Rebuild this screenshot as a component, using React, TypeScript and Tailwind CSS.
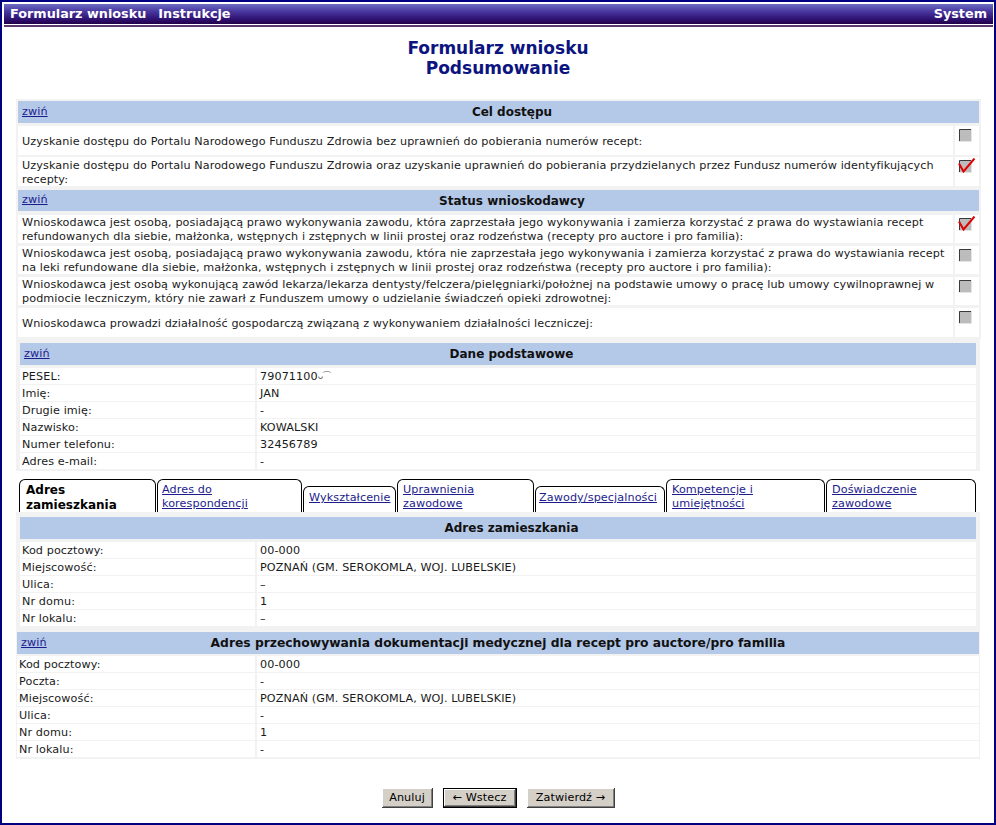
import React from "react";

const FONT = "font-['DejaVu_Sans',Verdana,sans-serif]";

function CheckBox({ checked }: { checked: boolean }) {
  return (
    <svg width="20" height="17" viewBox="0 0 20 17" className="block">
      <rect x="2" y="2" width="12" height="12" fill="#bcbcbc" />
      <path d="M2.5 14V2.5H14" fill="none" stroke="#3a3a3a" strokeWidth="1" />
      <path d="M2 14.5H14.5V2" fill="none" stroke="#e4e4e4" strokeWidth="1" />
      {checked && (
        <path
          d="M2 5.5L6.5 13.5L17.5 0.5"
          fill="none"
          stroke="#e00000"
          strokeWidth="2"
        />
      )}
    </svg>
  );
}

function SectionHeader({
  title,
  collapse = true,
  centerFull = false,
  h = "h-[22px]",
}: {
  title: string;
  collapse?: boolean;
  centerFull?: boolean;
  h?: string;
}) {
  if (centerFull) {
    return (
      <div className={`${h} bg-[#b4c8e8] grid grid-cols-[1fr_auto_1fr] items-center`}>
        <div className="pl-[4px]">
          {collapse && <a className="text-[#1c1c8c] underline">zwiń</a>}
        </div>
        <div className="font-bold text-[12.3px] tracking-normal text-[#111]">{title}</div>
        <div />
      </div>
    );
  }
  return (
    <div className={`${h} bg-[#b4c8e8] flex items-center`}>
      <div className="w-[27px] pl-[4px] shrink-0">
        {collapse && <a className="text-[#1c1c8c] underline">zwiń</a>}
      </div>
      <div className="flex-1 text-center font-bold text-[12px] tracking-normal text-[#111]">
        {title}
      </div>
    </div>
  );
}

function CheckRow({
  text,
  checked,
  h,
}: {
  text: React.ReactNode;
  checked: boolean;
  h: string;
}) {
  return (
    <div className={`flex gap-[2px] ${h}`}>
      <div className="flex-1 min-w-0 bg-white flex items-center pl-[4px] pr-[4px] pt-[2px] leading-[14px]">
        <div className="whitespace-nowrap">{text}</div>
      </div>
      <div className="w-[24px] shrink-0 bg-white pt-[1px] pl-[2px]">
        <CheckBox checked={checked} />
      </div>
    </div>
  );
}

function DataRows({
  rows,
  labelW,
}: {
  rows: [string, React.ReactNode][];
  labelW: string;
}) {
  return (
    <div className="flex flex-col gap-[1px]">
      {rows.map(([label, value]) => (
        <div key={label} className="flex gap-[2px] h-[16px]">
          <div className={`${labelW} shrink-0 bg-white pl-[2px] leading-[17px]`}>
            {label}
          </div>
          <div className="flex-1 bg-white pl-[3px] leading-[17px]">{value}</div>
        </div>
      ))}
    </div>
  );
}

type Tab = {
  label: React.ReactNode;
  w: string;
  short?: boolean;
  active?: boolean;
  pl?: string;
};

const tabs: Tab[] = [
  { label: <>Adres<br />zamieszkania</>, w: "w-[137px]", active: true, pl: "pl-[6px]" },
  { label: <>Adres do<br />korespondencji</>, w: "w-[145px]", pl: "pl-[4px]" },
  { label: "Wykształcenie", w: "w-[93px]", short: true, pl: "pl-[5px]" },
  { label: <>Uprawnienia<br />zawodowe</>, w: "w-[137px]", pl: "pl-[5px]" },
  { label: "Zawody/specjalności", w: "w-[130px]", short: true, pl: "pl-[3px]" },
  { label: <>Kompetencje i<br />umiejętności</>, w: "w-[159px]", pl: "pl-[5px]" },
  { label: <>Doświadczenie<br />zawodowe</>, w: "w-[150px]", pl: "pl-[5px]" },
];

const btn =
  "h-[20px] bg-[#d4d0c8] shadow-[inset_-1px_-1px_#404040,inset_1px_1px_#ffffff,inset_-2px_-2px_#808080]";

export default function App() {
  return (
    <div
      className={`${FONT} w-[996px] h-[825px] border-2 border-[#000080] bg-white text-[11.2px] tracking-[0.1px] text-[#1a1a1a] overflow-hidden`}
    >
      {/* TOP BAR */}
      <div className="mt-[2px] ml-[2px] mr-[1px] h-[20px] bg-[linear-gradient(to_bottom,#6e6ec4,#4a3aa0_35%,#32167a_70%,#22004a)] flex items-center justify-between px-[6px] text-white font-bold text-[12.8px] tracking-normal">
        <div className="flex gap-[12px]">
          <span>Formularz wniosku</span>
          <span>Instrukcje</span>
        </div>
        <span>System</span>
      </div>
      <div className="ml-[2px] mr-[1px] mt-[1px] h-[2px] bg-[#5a3a6e]" />

      {/* TITLE */}
      <div className="mt-[11px] text-center font-bold text-[17px] tracking-normal leading-[20px] text-[#0c1480]">
        <div>Formularz wniosku</div>
        <div>Podsumowanie</div>
      </div>

      {/* CEL DOSTEPU */}
      <div className="mt-[21px] ml-[14px] w-[965px] bg-[#f2f2f2] p-[2px] flex flex-col">
        <SectionHeader title="Cel dostępu" />
        <div className="mt-[3px]">
          <CheckRow
            h="h-[29px]"
            checked={false}
            text="Uzyskanie dostępu do Portalu Narodowego Funduszu Zdrowia bez uprawnień do pobierania numerów recept:"
          />
        </div>
        <div className="mt-[2px]">
          <CheckRow
            h="h-[29px]"
            checked={true}
            text={
              <>
                Uzyskanie dostępu do Portalu Narodowego Funduszu Zdrowia oraz uzyskanie uprawnień do pobierania przydzielanych przez Fundusz numerów identyfikujących
                <br />
                recepty:
              </>
            }
          />
        </div>
      </div>

      {/* STATUS */}
      <div className="ml-[14px] w-[965px] bg-[#f2f2f2] p-[2px] flex flex-col">
        <SectionHeader title="Status wnioskodawcy" h="h-[21px]" />
        <div className="mt-[4px] flex flex-col gap-[3px]">
          <CheckRow
            h="h-[28px]"
            checked={true}
            text={
              <>
                Wnioskodawca jest osobą, posiadającą prawo wykonywania zawodu, która zaprzestała jego wykonywania i zamierza korzystać z prawa do wystawiania recept
                <br />
                refundowanych dla siebie, małżonka, wstępnych i zstępnych w linii prostej oraz rodzeństwa (recepty pro auctore i pro familia):
              </>
            }
          />
          <CheckRow
            h="h-[28px]"
            checked={false}
            text={
              <>
                Wnioskodawca jest osobą, posiadającą prawo wykonywania zawodu, która nie zaprzestała jego wykonywania i zamierza korzystać z prawa do wystawiania recept
                <br />
                na leki refundowane dla siebie, małżonka, wstępnych i zstępnych w linii prostej oraz rodzeństwa (recepty pro auctore i pro familia):
              </>
            }
          />
          <CheckRow
            h="h-[28px]"
            checked={false}
            text={
              <>
                Wnioskodawca jest osobą wykonującą zawód lekarza/lekarza dentysty/felczera/pielęgniarki/położnej na podstawie umowy o pracę lub umowy cywilnoprawnej w
                <br />
                podmiocie leczniczym, który nie zawarł z Funduszem umowy o udzielanie świadczeń opieki zdrowotnej:
              </>
            }
          />
          <CheckRow
            h="h-[29px]"
            checked={false}
            text="Wnioskodawca prowadzi działalność gospodarczą związaną z wykonywaniem działalności leczniczej:"
          />
        </div>
      </div>

      {/* DANE PODSTAWOWE */}
      <div className="ml-[14px] w-[964px] bg-[#f2f2f2] px-[4px] pt-[4px] pb-[2px] flex flex-col gap-[3px]">
        <SectionHeader title="Dane podstawowe" />
        <DataRows
          labelW="w-[235px]"
          rows={[
            [
              "PESEL:",
              <>
                79071100<span className="text-[#555] text-[9px] align-top">ᴗ⁀</span>
              </>,
            ],
            ["Imię:", "JAN"],
            ["Drugie imię:", "-"],
            ["Nazwisko:", "KOWALSKI"],
            ["Numer telefonu:", "32456789"],
            ["Adres e-mail:", "-"],
          ]}
        />
      </div>

      {/* TABS */}
      <div className="mt-[8px] ml-[17px] flex items-end gap-[1px] h-[33px]">
        {tabs.map((t, i) => (
          <div
            key={i}
            className={`${t.w} ${t.pl} ${
              t.short ? "h-[26px] pt-[4px]" : "h-[33px] pt-[3px]"
            } shrink-0 bg-white border border-b-0 border-black rounded-t-[6px] leading-[14px] whitespace-nowrap`}
          >
            {t.active ? (
              <span className="font-bold text-[12px] tracking-normal text-black">{t.label}</span>
            ) : (
              <a className="text-[#1c1c8c] underline">{t.label}</a>
            )}
          </div>
        ))}
      </div>

      {/* ADRES ZAMIESZKANIA */}
      <div className="ml-[14px] w-[964px] bg-[#f2f2f2] px-[4px] pt-[5px] pb-[2px] flex flex-col gap-[3px]">
        <SectionHeader title="Adres zamieszkania" collapse={false} />
        <DataRows
          labelW="w-[235px]"
          rows={[
            ["Kod pocztowy:", "00-000"],
            ["Miejscowość:", "POZNAŃ (GM. SEROKOMLA, WOJ. LUBELSKIE)"],
            ["Ulica:", "–"],
            ["Nr domu:", "1"],
            ["Nr lokalu:", "–"],
          ]}
        />
      </div>

      {/* ADRES PRZECHOWYWANIA */}
      <div className="ml-[14px] w-[964px] bg-[#f2f2f2] px-[1px] pt-[4px] pb-[2px] flex flex-col gap-[2px]">
        <SectionHeader
          title="Adres przechowywania dokumentacji medycznej dla recept pro auctore/pro familia"
          centerFull
        />
        <DataRows
          labelW="w-[238px]"
          rows={[
            ["Kod pocztowy:", "00-000"],
            ["Poczta:", "-"],
            ["Miejscowość:", "POZNAŃ (GM. SEROKOMLA, WOJ. LUBELSKIE)"],
            ["Ulica:", "-"],
            ["Nr domu:", "1"],
            ["Nr lokalu:", "-"],
          ]}
        />
      </div>

      {/* BUTTONS */}
      <div className="mt-[29px] flex justify-center gap-[10px] text-black">
        <button className={`${btn} w-[51px]`}>Anuluj</button>
        <button className={`${btn} w-[74px] border border-black`}>← Wstecz</button>
        <button className={`${btn} w-[88px]`}>Zatwierdź →</button>
      </div>
    </div>
  );
}
